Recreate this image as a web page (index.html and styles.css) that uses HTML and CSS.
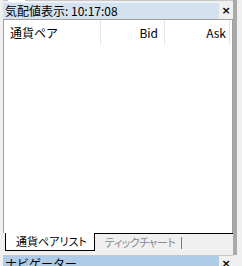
FILE: index.html
```html
<!DOCTYPE html>
<html lang="ja">
<head>
    <meta charset="UTF-8">
    <title>気配値表示</title>
    <link rel="stylesheet" href="styles.css">
</head>
<body>
    <div class="window">
        <div class="dock">
            <div class="topline"><span class="toptab"></span></div>
            <div class="title">
                <span class="title-text">気配値表示: 10:17:08</span>
                <span class="close">×</span>
            </div>
            <div class="list">
                <div class="list-head">
                    <div class="col col-pair">通貨ペア</div>
                    <div class="col col-bid">Bid</div>
                    <div class="col col-ask">Ask</div>
                </div>
            </div>
            <div class="tabs">
                <div class="tab active">通貨ペアリスト</div>
                <div class="tab muted">ティックチャート</div>
                <div class="tab-sep"></div>
                <div class="tab-fill"></div>
            </div>
            <div class="title next">
                <span class="title-text">ナビゲーター</span>
                <span class="close">×</span>
            </div>
        </div>
        <div class="strip"></div>
    </div>
</body>
</html>
```

FILE: styles.css
```css
body {
    margin: 0;
    background-color: #f0f0f0;
    font-family: "Noto Sans CJK JP", "Liberation Sans", sans-serif;
    font-size: 12px;
    color: #000;
    overflow: hidden;
}

.window {
    display: flex;
    width: 242px;
    height: 266px;
}

.dock {
    width: 230px;
    padding-left: 3px;
    display: flex;
    flex-direction: column;
}

.dock > div {
    flex-shrink: 0;
}

.topline {
    height: 3px;
    border-top: 1px solid #c8c8c8;
    box-sizing: border-box;
    position: relative;
}

.toptab {
    position: absolute;
    left: 5px;
    top: -1px;
    width: 17px;
    height: 2px;
    background-color: #fff;
}

.title {
    display: flex;
    height: 16px;
    align-items: center;
}

.title-text {
    flex: 1;
    height: 16px;
    line-height: 16px;
    padding-left: 2px;
    background-color: #d4e1ee;
    white-space: nowrap;
    overflow: hidden;
}

.close {
    width: 14px;
    text-align: center;
    font-family: "DejaVu Sans", sans-serif;
    font-weight: bold;
    font-size: 11px;
    line-height: 16px;
}

.list {
    height: 214px;
    background-color: #fff;
    border: 1px solid #a0a0a0;
    border-bottom: none;
    box-sizing: border-box;
}

.list-head {
    display: flex;
    height: 25px;
}

.col {
    line-height: 25px;
    padding: 0 6px;
    border-right: 1px solid #e5e5e5;
    box-sizing: border-box;
}

.col-pair {
    width: 97px;
}

.col-bid {
    width: 64px;
    text-align: right;
}

.col-ask {
    width: 65px;
    text-align: right;
    padding-right: 3px;
}

.tabs {
    display: flex;
    height: 18px;
    padding-left: 2px;
    font-size: 11px;
    font-feature-settings: "palt";
}

.tab {
    height: 17px;
    line-height: 16px;
    padding: 0 6px 0 10px;
    color: #8a8a8a;
    border-top: 1px solid #000;
    white-space: nowrap;
}

.tab.muted {
    letter-spacing: -0.5px;
}

.tab.active {
    color: #000;
    background-color: #fff;
    border: 1px solid #000;
    border-top: none;
    padding: 0 7px 0 10px;
}

.tab-sep {
    width: 1px;
    height: 12px;
    margin-top: 4px;
    background-color: #7a7a7a;
    position: relative;
}

.tab-sep::before {
    content: "";
    position: absolute;
    top: -4px;
    left: 0;
    width: 1px;
    height: 1px;
    background-color: #000;
}

.tab-fill {
    flex: 1;
    border-top: 1px solid #000;
    height: 17px;
}

.next {
    margin-top: 4px;
    border-top: 1px solid #c8c8c8;
}

.next .title-text {
    background-color: #aecbe8;
}

.strip {
    width: 4px;
    height: 255px;
    background-color: #a9a9a9;
}
```
